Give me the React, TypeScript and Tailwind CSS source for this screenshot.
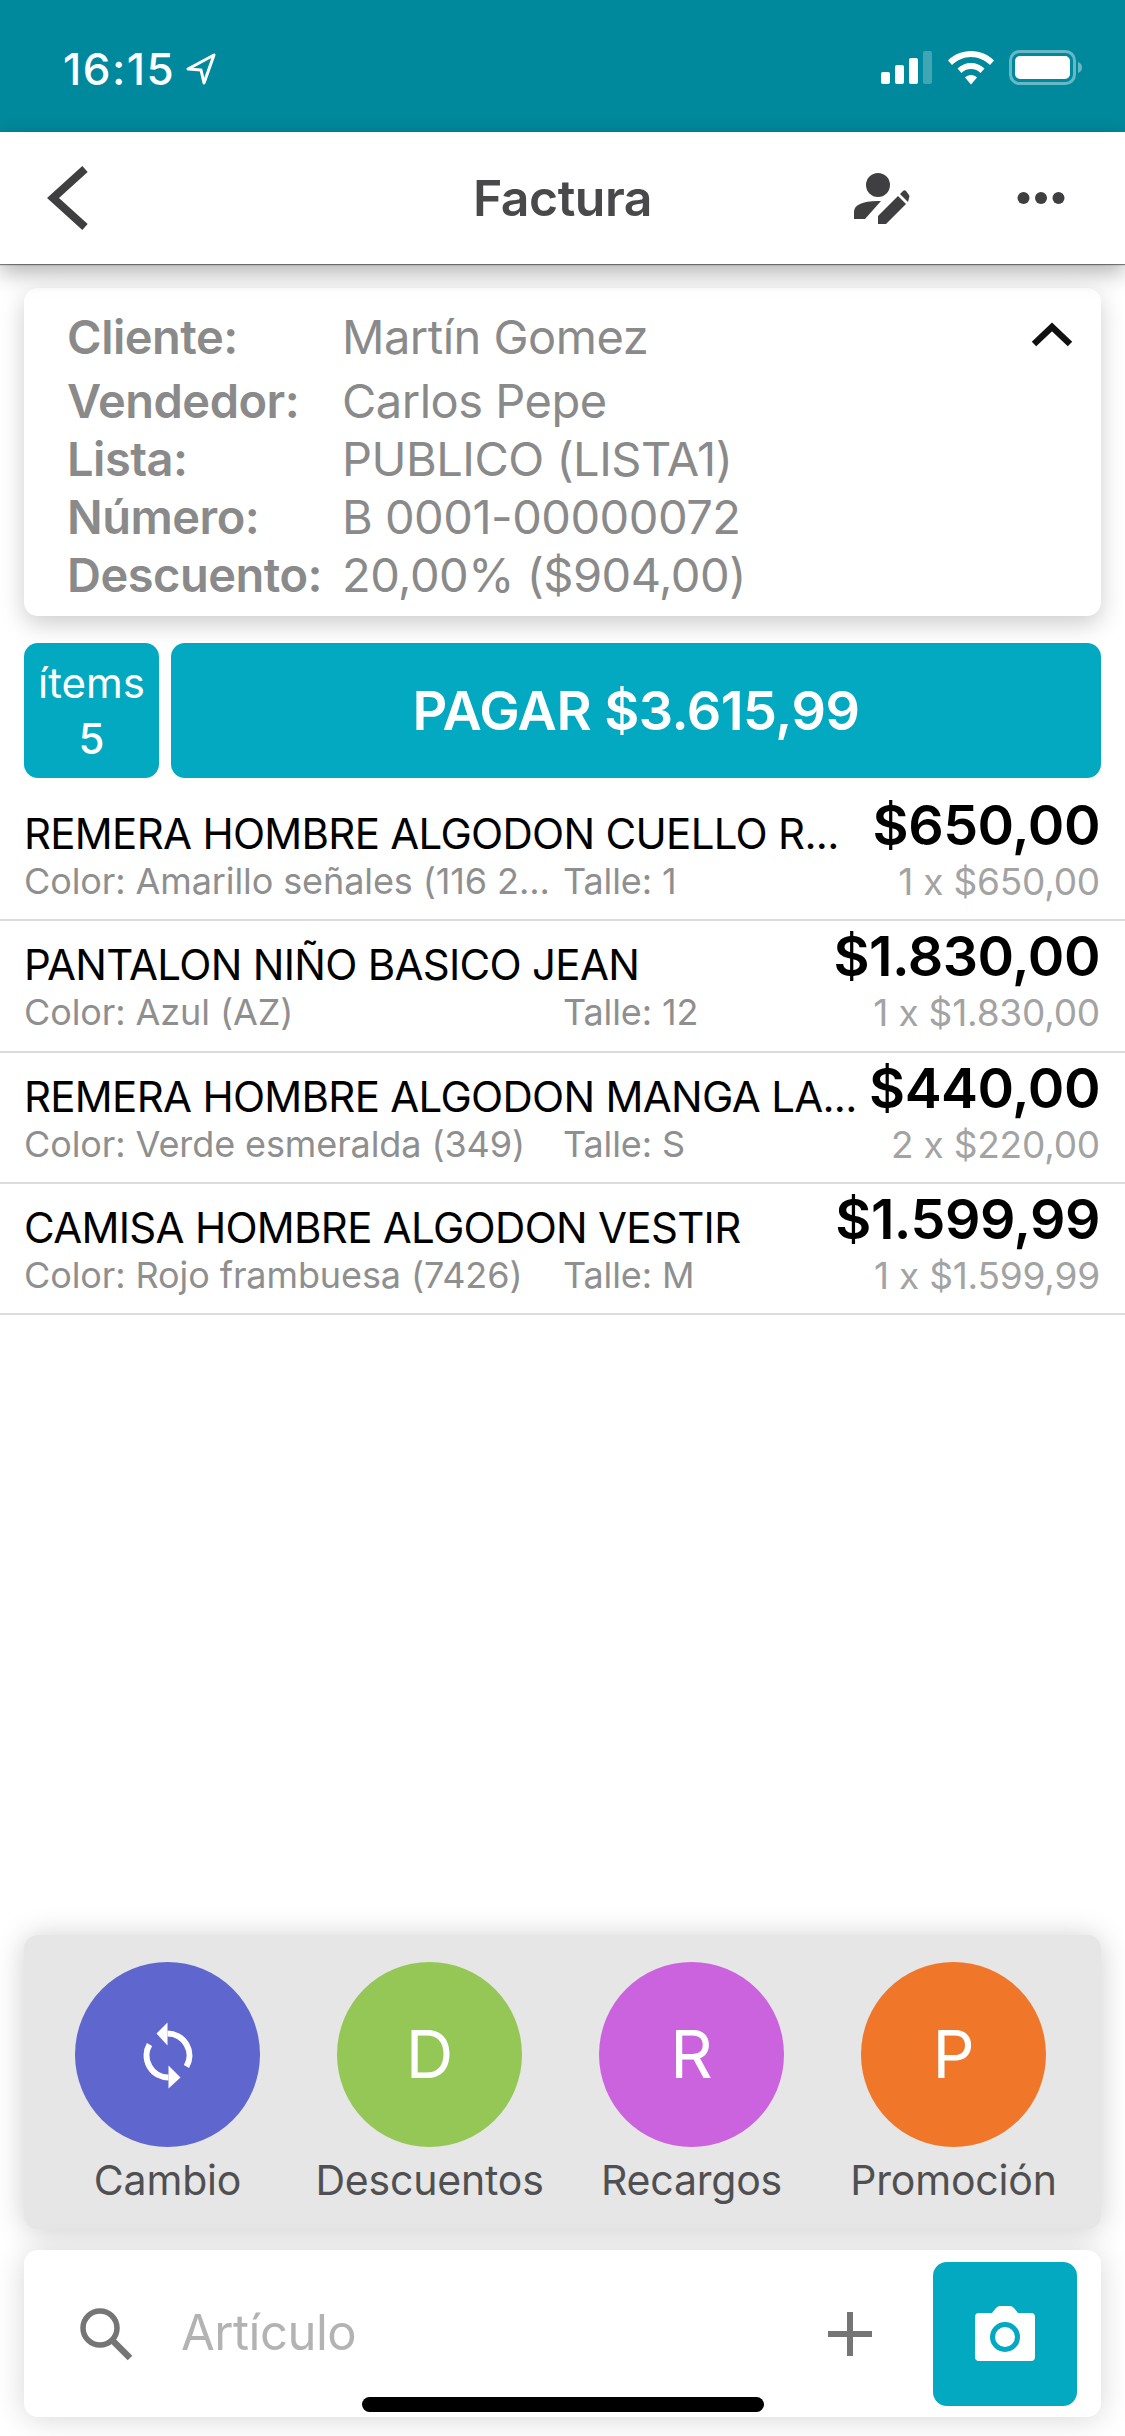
import React from 'react';

const items = [
  { name: 'REMERA HOMBRE ALGODON CUELLO R...', color: 'Color: Amarillo señales (116 2...', talle: 'Talle: 1', total: '$650,00', unit: '1 x $650,00' },
  { name: 'PANTALON NIÑO BASICO JEAN', color: 'Color: Azul (AZ)', talle: 'Talle: 12', total: '$1.830,00', unit: '1 x $1.830,00' },
  { name: 'REMERA HOMBRE ALGODON MANGA LA...', color: 'Color: Verde esmeralda (349)', talle: 'Talle: S', total: '$440,00', unit: '2 x $220,00' },
  { name: 'CAMISA HOMBRE ALGODON VESTIR', color: 'Color: Rojo frambuesa (7426)', talle: 'Talle: M', total: '$1.599,99', unit: '1 x $1.599,99' },
];

const details = [
  { label: 'Cliente:', value: 'Martín Gomez', height: 'h-[69px]' },
  { label: 'Vendedor:', value: 'Carlos Pepe', height: 'h-[58px]' },
  { label: 'Lista:', value: 'PUBLICO (LISTA1)', height: 'h-[58px]' },
  { label: 'Número:', value: 'B 0001-00000072', height: 'h-[58px]' },
  { label: 'Descuento:', value: '20,00% ($904,00)', height: 'h-[58px]' },
];

const StatusBar: React.FC = () => (
  <div className="h-[132px] bg-[#00899d] flex items-start justify-between pt-[44px] pl-[63px] pr-[42px] text-white">
    <div className="flex items-center gap-[10px] text-[44px] leading-[50px] font-medium tracking-[1.5px]">
      <span>16:15</span>
      <svg width="32" height="34" viewBox="0 0 32 34" fill="none" stroke="white" strokeWidth="3" strokeLinejoin="round">
        <path d="M29 3 L3 17 L16 18 L19 31 Z" />
      </svg>
    </div>
    <div className="flex items-center gap-[15px] pt-[6px]">
      <svg width="52" height="33" viewBox="0 0 52 33" fill="white">
        <rect x="0" y="21" width="9" height="12" rx="2" />
        <rect x="14" y="14" width="9" height="19" rx="2" />
        <rect x="28" y="7" width="9" height="26" rx="2" />
        <rect x="42" y="0" width="9" height="33" rx="2" fillOpacity="0.25" />
      </svg>
      <svg width="46" height="34" viewBox="0 0 46 34" fill="white">
        <path d="M23 0 C32 0 40 3.500 46 9.500 L42 14 C37 9 30 6 23 6 C16 6 9 9 4 14 L0 9.500 C6 3.500 14 0 23 0 Z" />
        <path d="M23 12 C28 12 33 14 36.500 17.500 L32.500 22 C30 19.500 27 18 23 18 C19 18 16 19.500 13.500 22 L9.500 17.500 C13 14 18 12 23 12 Z" />
        <path d="M23 24 C25.500 24 27.500 25 29 26.500 L23 33.500 L17 26.500 C18.500 25 20.500 24 23 24 Z" />
      </svg>
      <svg width="74" height="35" viewBox="0 0 74 35" fill="none">
        <rect x="1.500" y="1.500" width="64" height="32" rx="9" stroke="white" strokeOpacity="0.4" strokeWidth="3" />
        <rect x="6" y="6" width="55" height="23" rx="5" fill="white" />
        <path d="M69 12 C72 13 73 15 73 17.500 C73 20 72 22 69 23 Z" fill="white" fillOpacity="0.4" />
      </svg>
    </div>
  </div>
);

const NavBar: React.FC = () => (
  <div className="relative z-10 h-[132px] bg-white flex items-center justify-between pl-[46px] pr-[60px] shadow-[0_1px_1px_rgba(0,0,0,0.45),0_8px_22px_rgba(0,0,0,0.32)]">
    <svg width="44" height="64" viewBox="0 0 44 64" fill="none" stroke="#3f3f41" strokeWidth="8">
      <path d="M39 3 L7 32 L39 61" />
    </svg>
    <span className="absolute left-0 right-0 text-center text-[50px] font-semibold tracking-[-0.5px] text-[#49494b] pointer-events-none">Factura</span>
    <div className="flex items-center gap-[107px]">
      <svg width="56" height="52" viewBox="0 0 56 52" fill="#3f3f41">
        <circle cx="24" cy="13" r="12" />
        <path d="M0 47 V40 C0 33 8 29 24 29 L27 29 L11 47 Z" />
        <path d="M24 52 V44 L44 24 L52 32 L32 52 Z" />
        <path d="M46 22 L49 19 C50 18 51 18 52 19 L55 23 C55.500 24 55.500 25 55 26 L54 30 Z" />
      </svg>
      <svg width="48" height="14" viewBox="0 0 48 14" fill="#3f3f41">
        <circle cx="6.500" cy="7" r="6" />
        <circle cx="24" cy="7" r="6" />
        <circle cx="41.500" cy="7" r="6" />
      </svg>
    </div>
  </div>
);

const DetailsCard: React.FC = () => (
  <div className="relative mx-[24px] mt-[24px] h-[328px] bg-white rounded-[14px] pl-[43px] pt-[15px] shadow-[0_8px_24px_rgba(0,0,0,0.2)]">
    {details.map((d) => (
      <div key={d.label} className={`flex items-center text-[47px] tracking-[-0.5px] text-[#8a8a8a] ${d.height}`}>
        <span className="w-[275px] font-semibold whitespace-nowrap">{d.label}</span>
        <span className="whitespace-nowrap">{d.value}</span>
      </div>
    ))}
    <svg className="absolute right-[28px] top-[33px]" width="42" height="26" viewBox="0 0 42 26" fill="none" stroke="#111" strokeWidth="6.500">
      <path d="M3 23 L21 6 L39 23" />
    </svg>
  </div>
);

const PayRow: React.FC = () => (
  <div className="flex gap-[12px] mx-[24px] mt-[27px] h-[135px] text-white">
    <div className="w-[135px] bg-[#02a9c1] rounded-[14px] flex flex-col items-center justify-center text-[42px] leading-[56px]">
      <span>ítems</span>
      <span className="font-medium">5</span>
    </div>
    <div className="flex-1 bg-[#02a9c1] rounded-[14px] flex items-center justify-center text-[54px] font-semibold tracking-[-0.5px]">
      PAGAR $3.615,99
    </div>
  </div>
);

const ItemRow: React.FC<{ item: (typeof items)[number] }> = ({ item }) => (
  <div className="h-[131.33px] border-b-2 border-[#dcdcdc] flex justify-between pl-[24px] pr-[25px]">
    <div className="pt-[19px] min-w-0">
      <div className="text-[42px] leading-[50px] tracking-[-0.7px] text-black whitespace-nowrap">{item.name}</div>
      <div className="flex text-[36px] leading-[44px] tracking-[-0.1px] text-[#8f8f8f]">
        <span className="w-[539px] whitespace-nowrap">{item.color}</span>
        <span>{item.talle}</span>
      </div>
    </div>
    <div className="flex flex-col items-end pt-[4px]">
      <div className="text-[55.500px] leading-[62px] font-semibold tracking-[-0.5px] text-black">{item.total}</div>
      <div className="text-[37px] leading-[44px] tracking-[-0.2px] text-[#a3a3a3] mt-[4px]">{item.unit}</div>
    </div>
  </div>
);

const Action: React.FC<{ label: string; bg: string; children: React.ReactNode }> = ({ label, bg, children }) => (
  <div className="flex flex-col items-center w-[262px]">
    <div className={`w-[185px] h-[185px] rounded-full flex items-center justify-center text-white text-[66px] ${bg}`}>
      {children}
    </div>
    <span className="mt-[8px] text-[41px] leading-[50px] tracking-[-0.2px] text-[#505052] whitespace-nowrap">{label}</span>
  </div>
);

const ActionPanel: React.FC = () => (
  <div className="mx-[24px] h-[294px] bg-[#e6e6e6] rounded-[14px] flex justify-center pr-[4px] pt-[27px] shadow-[0_2px_30px_rgba(0,0,0,0.2)]">
    <Action label="Cambio" bg="bg-[#5f67cf]">
      <svg width="100" height="100" viewBox="-2.500 4.500 100 100" fill="none" stroke="white" strokeWidth="6">
        <path d="M47 33 A22 22 0 0 1 66 66" />
        <path d="M48 77 A22 22 0 0 1 29 44" />
        <path d="M36 33 L47 22 V45 Z" fill="white" strokeWidth="0" />
        <path d="M60 77 L48 65 V88 Z" fill="white" strokeWidth="0" />
      </svg>
    </Action>
    <Action label="Descuentos" bg="bg-[#95c757]">D</Action>
    <Action label="Recargos" bg="bg-[#cc63de]">R</Action>
    <Action label="Promoción" bg="bg-[#f07729]">P</Action>
  </div>
);

const SearchBar: React.FC = () => (
  <div className="mx-[24px] mt-[21px] mb-[19px] h-[167px] bg-white rounded-[14px] flex items-center pl-[56px] pr-[24px] shadow-[0_2px_30px_rgba(0,0,0,0.16)]">
    <svg width="54" height="54" viewBox="0 0 54 54" fill="none" stroke="#757575" strokeWidth="5.500">
      <circle cx="20" cy="21" r="17" />
      <path d="M32 33 L50 51" strokeWidth="6.500" />
    </svg>
    <span className="ml-[47px] flex-1 text-[49px] leading-[60px] -translate-y-[1px] tracking-[-0.5px] text-[#b3b3b3]">Artículo</span>
    <svg className="mr-[61px]" width="44" height="44" viewBox="0 0 44 44" fill="#757575">
      <rect x="19" y="0" width="6" height="44" />
      <rect x="0" y="19" width="44" height="6" />
    </svg>
    <div className="w-[144px] h-[144px] bg-[#02a9c1] rounded-[14px] flex items-center justify-center">
      <svg width="60" height="55" viewBox="0 0 60 55" fill="white">
        <path fillRule="evenodd" d="M17 7 L21 2 Q23 0 25 0 H35 Q37 0 39 2 L43 7 H56 A4 4 0 0 1 60 11 V51 A4 4 0 0 1 56 55 H4 A4 4 0 0 1 0 51 V11 A4 4 0 0 1 4 7 Z M30 16 A15 15 0 1 0 30 46 A15 15 0 1 0 30 16 Z M30 21 A10 10 0 1 1 30 41 A10 10 0 1 1 30 21 Z" />
      </svg>
    </div>
  </div>
);

const App: React.FC = () => (
  <div className="relative h-[2436px] w-[1125px] flex flex-col bg-white overflow-hidden font-['Inter',_sans-serif]">
    <StatusBar />
    <NavBar />
    <DetailsCard />
    <PayRow />
    <div className="mt-[12px]">
      {items.map((item) => (
        <ItemRow key={item.name} item={item} />
      ))}
    </div>
    <div className="flex-1" />
    <ActionPanel />
    <SearchBar />
    {/* home indicator */}
    <div className="absolute left-[362px] top-[2397px] w-[402px] h-[15px] rounded-full bg-black" />
  </div>
);

export default App;
